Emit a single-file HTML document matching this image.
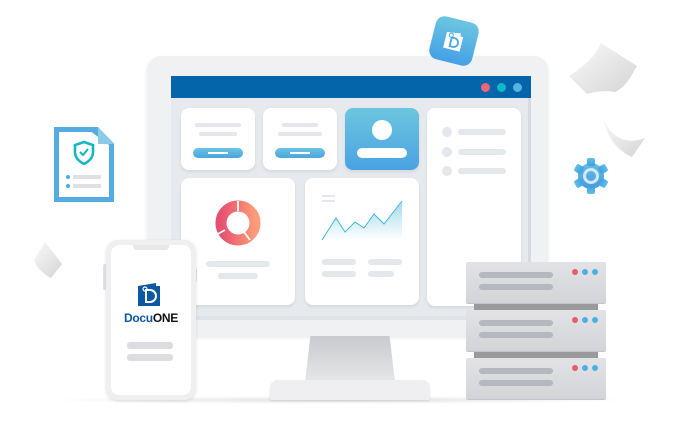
<!DOCTYPE html>
<html><head><style>
*{margin:0;padding:0;box-sizing:border-box}
body{width:680px;height:440px;background:#fff;position:relative;overflow:hidden;font-family:"Liberation Sans",sans-serif}
.a{position:absolute}
.card{position:absolute;background:#fff;border-radius:8px;box-shadow:0 2px 3px rgba(0,0,0,.08)}
.bar{position:absolute;background:#e4e7ec;border-radius:4px}
.g{position:absolute;background:#dcdde0;border-radius:3px}
.srv{position:absolute;left:466px;width:140px;height:42px;background:linear-gradient(#e2e3e6,#d3d4d8);border-radius:2px;border-bottom:1px solid #b9c7d6}
.srv .l{position:absolute;left:13px;width:74px;height:6px;background:#b6b8c0;border-radius:3px}
.dot{position:absolute;width:6px;height:6px;border-radius:50%}
</style></head><body>
<div class="a" style="left:40px;top:396px;width:600px;height:8px;background:radial-gradient(ellipse at center,rgba(0,0,0,.12),rgba(0,0,0,0) 70%)"></div>
<div class="a" style="left:147px;top:56px;width:401px;height:280px;background:#f0f1f3;border-radius:14px;box-shadow:0 2px 4px rgba(0,0,0,.08)"></div>
<div class="a" style="left:171px;top:76px;width:360px;height:240px;background:#e6e9ee;border-right:3px solid #d7dbe1"></div>
<div class="a" style="left:171px;top:316px;width:360px;height:4px;background:#dfe3e8"></div>
<div class="a" style="left:171px;top:76px;width:360px;height:22px;background:#0565ab"></div>
<div class="dot" style="left:481px;top:83px;width:9px;height:9px;background:#ef6576"></div>
<div class="dot" style="left:497px;top:83px;width:9px;height:9px;background:#11b8c6"></div>
<div class="dot" style="left:513px;top:83px;width:9px;height:9px;background:#57b3e2"></div>
<div class="a" style="left:305px;top:336px;width:90px;height:46px;background:linear-gradient(#c9cacd,#e6e7e9);clip-path:polygon(6% 0,94% 0,100% 100%,0 100%)"></div>
<div class="a" style="left:270px;top:380px;width:160px;height:20px;background:#efeff1;border-radius:8px 8px 2px 2px;box-shadow:0 1px 2px rgba(0,0,0,.1)"></div>
<div class="card" style="left:181px;top:108px;width:74px;height:62px"></div>
<div class="bar" style="left:195px;top:123px;width:46px;height:4px"></div>
<div class="bar" style="left:199px;top:132px;width:38px;height:4px"></div>
<div class="a" style="left:193px;top:148px;width:50px;height:10px;background:linear-gradient(#6cc3e3,#49a6dc);border-radius:5px"></div>
<div class="a" style="left:208px;top:152px;width:20px;height:2px;background:#fff"></div>
<div class="card" style="left:263px;top:108px;width:74px;height:62px"></div>
<div class="bar" style="left:282px;top:123px;width:36px;height:4px"></div>
<div class="bar" style="left:278px;top:132px;width:44px;height:4px"></div>
<div class="a" style="left:275px;top:148px;width:50px;height:10px;background:linear-gradient(#6cc3e3,#49a6dc);border-radius:5px"></div>
<div class="a" style="left:290px;top:152px;width:20px;height:2px;background:#fff"></div>
<div class="card" style="left:345px;top:108px;width:74px;height:62px;background:linear-gradient(#6cc6df,#4aa2e2)"></div>
<div class="a" style="left:372px;top:120px;width:20px;height:20px;border-radius:50%;background:#fff"></div>
<div class="a" style="left:357px;top:148px;width:50px;height:10px;border-radius:5px;background:#fff"></div>
<div class="card" style="left:427px;top:108px;width:94px;height:198px"></div>
<div class="dot" style="left:442px;top:127px;width:10px;height:10px;background:#e4e7ec"></div>
<div class="dot" style="left:442px;top:147px;width:10px;height:10px;background:#e4e7ec"></div>
<div class="dot" style="left:442px;top:166px;width:10px;height:10px;background:#e4e7ec"></div>
<div class="bar" style="left:458px;top:129px;width:48px;height:6px"></div>
<div class="bar" style="left:458px;top:149px;width:48px;height:6px"></div>
<div class="bar" style="left:458px;top:168px;width:48px;height:6px"></div>
<div class="card" style="left:181px;top:178px;width:114px;height:127px"></div>
<svg class="a" style="left:213px;top:199px" width="50" height="48" viewBox="0 0 50 48">
<defs><linearGradient id="d" x1="0" x2="1"><stop offset="0" stop-color="#e6506f"/><stop offset="1" stop-color="#fd9c78"/></linearGradient></defs>
<circle cx="25" cy="24" r="17" fill="none" stroke="url(#d)" stroke-width="11"/>
<path d="M25 2V12M12 31L3 36M31 33L37 41" stroke="#fff" stroke-width="1.8"/></svg>
<div class="bar" style="left:206px;top:261px;width:64px;height:6px"></div>
<div class="bar" style="left:218px;top:273px;width:40px;height:6px"></div>
<div class="card" style="left:305px;top:178px;width:114px;height:127px"></div>
<div class="a" style="left:322px;top:195px;width:13px;height:2px;background:#e4e7ec"></div>
<div class="a" style="left:322px;top:200px;width:13px;height:2px;background:#e4e7ec"></div>
<svg class="a" style="left:320px;top:198px" width="84" height="44" viewBox="0 0 84 44">
<defs><linearGradient id="c" x1="0" y1="0" x2="0" y2="1"><stop offset="0" stop-color="#a4dbea"/><stop offset="1" stop-color="#fff"/></linearGradient></defs>
<path d="M2 42L16 20L25 34L35 24L44 30L54 16L64 26L82 3V42Z" fill="url(#c)"/>
<path d="M2 42L16 20L25 34L35 24L44 30L54 16L64 26L82 3" fill="none" stroke="#3cb8d8" stroke-width="1"/></svg>
<div class="bar" style="left:322px;top:259px;width:34px;height:6px"></div>
<div class="bar" style="left:368px;top:259px;width:34px;height:6px"></div>
<div class="bar" style="left:322px;top:271px;width:34px;height:6px"></div>
<div class="bar" style="left:368px;top:271px;width:26px;height:6px"></div>
<div class="a" style="left:474px;top:302px;width:124px;height:10px;background:#9a9a9c"></div>
<div class="a" style="left:474px;top:350px;width:124px;height:10px;background:#9a9a9c"></div>
<div class="srv" style="top:262px"><div class="l" style="top:10px"></div><div class="l" style="top:22px"></div><div class="dot" style="left:106px;top:7px;background:#ec5b6c"></div><div class="dot" style="left:116px;top:7px;background:#4cb0e4"></div><div class="dot" style="left:126px;top:7px;background:#4cb0e4"></div></div>
<div class="srv" style="top:310px"><div class="l" style="top:10px"></div><div class="l" style="top:22px"></div><div class="dot" style="left:106px;top:7px;background:#ec5b6c"></div><div class="dot" style="left:116px;top:7px;background:#4cb0e4"></div><div class="dot" style="left:126px;top:7px;background:#4cb0e4"></div></div>
<div class="srv" style="top:358px"><div class="l" style="top:10px"></div><div class="l" style="top:22px"></div><div class="dot" style="left:106px;top:7px;background:#ec5b6c"></div><div class="dot" style="left:116px;top:7px;background:#4cb0e4"></div><div class="dot" style="left:126px;top:7px;background:#4cb0e4"></div></div>
<div class="a" style="left:103px;top:264px;width:4px;height:26px;background:#e2e3e5;border-radius:2px"></div>
<div class="a" style="left:193px;top:268px;width:4px;height:14px;background:#e2e3e5;border-radius:2px"></div>
<div class="a" style="left:106px;top:240px;width:90px;height:160px;background:#efeff1;border-radius:12px;box-shadow:0 1px 3px rgba(0,0,0,.12)"></div>
<div class="a" style="left:111px;top:245px;width:80px;height:150px;background:#fff;border-radius:8px"></div>
<div class="a" style="left:133px;top:245px;width:36px;height:5px;background:#e8e8ea;border-radius:0 0 4px 4px"></div>
<svg class="a" style="left:138px;top:283px" width="24" height="24" viewBox="0 0 24 24">
<path d="M0 3L18 0V3H22V23H0Z" fill="#0d58a3"/>
<path d="M8 7H12A6 6 0 0 1 12 19H8Z" fill="none" stroke="#fff" stroke-width="2"/><circle cx="7" cy="6" r="2" fill="none" stroke="#fff" stroke-width="1.2"/></svg>
<div class="a" style="left:122px;top:311px;width:58px;text-align:center;font-weight:bold;font-size:12px;letter-spacing:-.3px"><span style="color:#0d58a3">Docu</span><span style="color:#111">ONE</span></div>
<div class="g" style="left:127px;top:342px;width:46px;height:7px"></div>
<div class="g" style="left:127px;top:354px;width:46px;height:7px"></div>
<div class="a" style="left:54px;top:127px;width:60px;height:75px;background:#55ace0;clip-path:polygon(0 0,73% 0,100% 22%,100% 100%,0 100%)"></div>
<div class="a" style="left:59px;top:132px;width:50px;height:65px;background:#fff;clip-path:polygon(0 0,65% 0,100% 20%,100% 100%,0 100%)"></div>
<div class="a" style="left:98px;top:127px;width:16px;height:17px;background:#8acbec;clip-path:polygon(0 0,100% 100%,0 100%)"></div>
<svg class="a" style="left:72px;top:140px" width="24" height="26" viewBox="0 0 24 26"><path d="M12 2L21 5V12C21 18 16 22 12 24C8 22 3 18 3 12V5Z" fill="none" stroke="#14b6c4" stroke-width="2.6"/><path d="M8 12L11 15L16 9" fill="none" stroke="#14b6c4" stroke-width="2"/></svg>
<div class="dot" style="left:66px;top:175px;width:4px;height:4px;background:#4aaee0"></div>
<div class="dot" style="left:66px;top:184px;width:4px;height:4px;background:#4aaee0"></div>
<div class="a" style="left:73px;top:175px;width:28px;height:4px;background:#dfe0e3"></div>
<div class="a" style="left:73px;top:184px;width:28px;height:4px;background:#dfe0e3"></div>
<div class="a" style="left:432px;top:19px;width:44px;height:44px;border-radius:9px;background:linear-gradient(#6cc6e0,#45a0e6);transform:rotate(14deg)"></div>
<svg class="a" style="left:441px;top:28px;transform:rotate(14deg)" width="26" height="26" viewBox="0 0 26 26"><path d="M4 6L18 4V7H21V22H4Z" fill="#fff"/><path d="M10 10H13A4.5 4.5 0 0 1 13 19H10Z" fill="none" stroke="#4aa6e2" stroke-width="1.8"/><circle cx="9" cy="8" r="2" fill="#fff" stroke="#4aa6e2" stroke-width="1"/></svg>
<svg class="a" style="left:572px;top:158px" width="38" height="36" viewBox="0 0 38 36"><defs><linearGradient id="gg" x1="0" y1="0" x2="0" y2="1"><stop offset="0" stop-color="#63c1e3"/><stop offset="1" stop-color="#3f9de4"/></linearGradient></defs>
<g fill="url(#gg)" transform="translate(19 18)"><circle r="13"/>
<g id="t"><rect x="-4" y="-18" width="8" height="8" rx="2"/></g><use href="#t" transform="rotate(60)"/><use href="#t" transform="rotate(120)"/><use href="#t" transform="rotate(180)"/><use href="#t" transform="rotate(240)"/><use href="#t" transform="rotate(300)"/></g>
<circle cx="19" cy="18" r="6.5" fill="none" stroke="#d8e6ef" stroke-width="3"/></svg>
<svg class="a" style="left:565px;top:40px" width="80" height="120" viewBox="0 0 80 120">
<defs><linearGradient id="p" x1="0" y1="0" x2="1" y2="1"><stop offset="0" stop-color="#fafafa"/><stop offset="1" stop-color="#d4d4d6"/></linearGradient></defs>
<path d="M4 36C16 28 30 18 36 3L72 26C66 36 62 46 50 52C38 50 30 52 22 54Z" fill="url(#p)"/>
<path d="M38 77C44 95 58 106 80 98L67 117C52 110 42 98 38 77Z" fill="url(#p)"/></svg>
<svg class="a" style="left:32px;top:240px" width="40" height="40" viewBox="0 0 40 40"><path d="M13 2L30 24L19 38C10 34 4 26 2 20Z" fill="url(#p)"/></svg>
</body></html>
